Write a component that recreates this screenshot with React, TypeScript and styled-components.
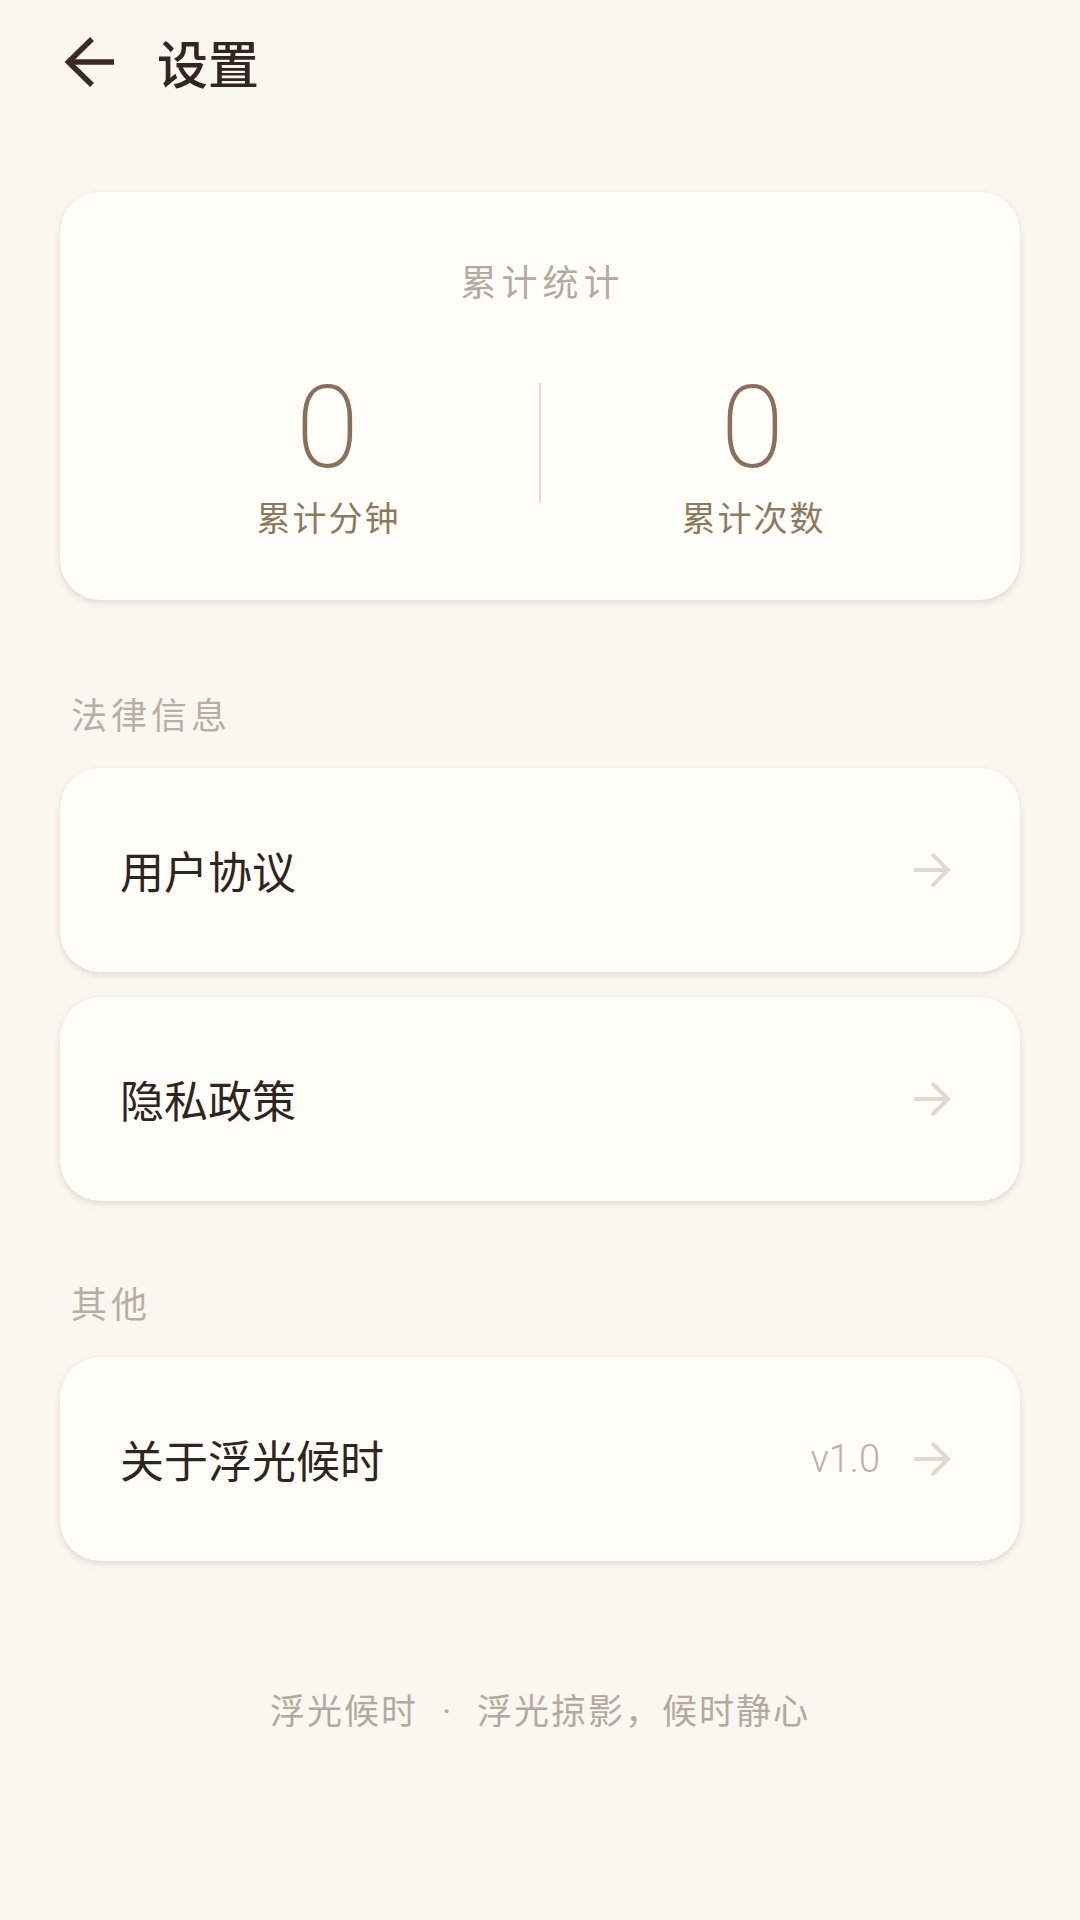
import React from "react";
import styled, { createGlobalStyle } from "styled-components";

const GlobalStyle = createGlobalStyle`
  html, body {
    margin: 0;
    padding: 0;
    background: #faf6f0;
  }
  body {
    font-family: "Noto Sans CJK SC", "Noto Sans", sans-serif;
    -webkit-font-smoothing: antialiased;
  }
`;

const CJK = `"Noto Sans CJK SC", "Noto Sans", sans-serif`;

const Page = styled.div`
  width: 1080px;
  min-height: 1920px;
  box-sizing: border-box;
  padding: 0 60px;
  background: #faf6f0;
  display: flex;
  flex-direction: column;
`;

const Header = styled.header`
  height: 122px;
  display: flex;
  align-items: center;
  gap: 41px;
`;

const BackButton = styled.button`
  width: 56px;
  height: 56px;
  padding: 0;
  border: 0;
  background: transparent;
  display: flex;
  align-items: center;
  justify-content: center;
  margin-top: 2px;
`;

const Title = styled.h1`
  margin: 0;
  font-family: ${CJK};
  font-size: 51px;
  font-weight: 500;
  line-height: 1.3;
  color: #33261f;
  margin-top: 2px;
`;

const Card = styled.section`
  background: #fffdf8;
  border-radius: 40px;
  box-shadow: 0 3px 6px rgba(110, 90, 70, 0.16), 0 0 1px rgba(110, 90, 70, 0.08);
`;

const StatsCard = styled(Card)`
  margin-top: 70px;
  padding: 63px 56px 59px;
  display: flex;
  flex-direction: column;
  align-items: center;
`;

const StatsTitle = styled.div`
  font-family: ${CJK};
  font-size: 36px;
  line-height: 50px;
  letter-spacing: 5px;
  margin-right: -5px;
  color: #b3aaa0;
`;

const StatsRow = styled.div`
  margin-top: 65px;
  width: 100%;
  display: flex;
  align-items: flex-start;
`;

const StatColumn = styled.div`
  flex: 1;
  display: flex;
  flex-direction: column;
  align-items: center;
`;

const StatNumber = styled.div`
  font-family: Roboto, "Noto Sans", sans-serif;
  font-size: 115px;
  font-weight: 200;
  line-height: 115px;
  color: #8a6f5c;
`;

const StatLabel = styled.div`
  margin-top: 8px;
  font-family: ${CJK};
  font-size: 34px;
  line-height: 48px;
  letter-spacing: 2px;
  margin-right: -2px;
  color: #8d7860;
`;

const Divider = styled.div`
  width: 2px;
  height: 120px;
  margin-top: 13px;
  background: #e6ded2;
`;

const SectionLabel = styled.div<{ $top: number }>`
  margin: ${(p) => p.$top}px 0 30px 11px;
  font-family: ${CJK};
  font-size: 36px;
  line-height: 50px;
  letter-spacing: 4px;
  color: #b8afa4;
`;

const CardList = styled.div`
  display: flex;
  flex-direction: column;
  gap: 25px;
`;

const RowCard = styled(Card)`
  height: 204px;
  box-sizing: border-box;
  padding: 0 69px 0 60px;
  display: flex;
  align-items: center;
  justify-content: space-between;
`;

const RowText = styled.div`
  font-family: ${CJK};
  font-size: 44px;
  line-height: 60px;
  color: #2f2520;
`;

const RowTrail = styled.div`
  display: flex;
  align-items: center;
  gap: 33px;
`;

const Version = styled.span`
  font-family: Roboto, "Noto Sans", sans-serif;
  font-size: 38px;
  font-weight: 300;
  color: #b9b1a6;
`;

const Footer = styled.footer`
  margin-top: 123px;
  text-align: center;
  font-family: ${CJK};
  font-size: 35px;
  line-height: 49px;
  letter-spacing: 2px;
  color: #b3aa9f;
`;

const Dot = styled.span`
  font-family: Roboto, "Noto Sans", sans-serif;
  margin: 0 24px;
`;

const BackIcon = () => (
  <svg width="56" height="56" viewBox="0 0 56 56" fill="none">
    <path d="M8 28 H54" stroke="#3a2a21" strokeWidth="5.5" />
    <path d="M32 5 L8.5 28 L32 51" stroke="#3a2a21" strokeWidth="5.5" strokeLinejoin="miter" />
  </svg>
);

const ForwardIcon = () => (
  <svg width="38" height="38" viewBox="0 0 38 38" fill="none">
    <path d="M1 19 H34" stroke="#dedad1" strokeWidth="4" />
    <path d="M19 3 L35 19 L19 35" stroke="#dedad1" strokeWidth="4" />
  </svg>
);

type Item = { label: string; trail?: string };

const Row = ({ label, trail }: Item) => (
  <RowCard>
    <RowText>{label}</RowText>
    <RowTrail>
      {trail && <Version>{trail}</Version>}
      <ForwardIcon />
    </RowTrail>
  </RowCard>
);

export default function App() {
  return (
    <>
      <GlobalStyle />
      <Page>
        <Header>
          <BackButton aria-label="返回">
            <BackIcon />
          </BackButton>
          <Title>设置</Title>
        </Header>

        <StatsCard>
          <StatsTitle>累计统计</StatsTitle>
          <StatsRow>
            <StatColumn>
              <StatNumber>0</StatNumber>
              <StatLabel>累计分钟</StatLabel>
            </StatColumn>
            <Divider />
            <StatColumn>
              <StatNumber>0</StatNumber>
              <StatLabel>累计次数</StatLabel>
            </StatColumn>
          </StatsRow>
        </StatsCard>

        <SectionLabel $top={88}>法律信息</SectionLabel>
        <CardList>
          <Row label="用户协议" />
          <Row label="隐私政策" />
        </CardList>

        <SectionLabel $top={76}>其他</SectionLabel>
        <CardList>
          <Row label="关于浮光候时" trail="v1.0" />
        </CardList>

        <Footer>
          浮光候时<Dot>·</Dot>浮光掠影，候时静心
        </Footer>
      </Page>
    </>
  );
}
